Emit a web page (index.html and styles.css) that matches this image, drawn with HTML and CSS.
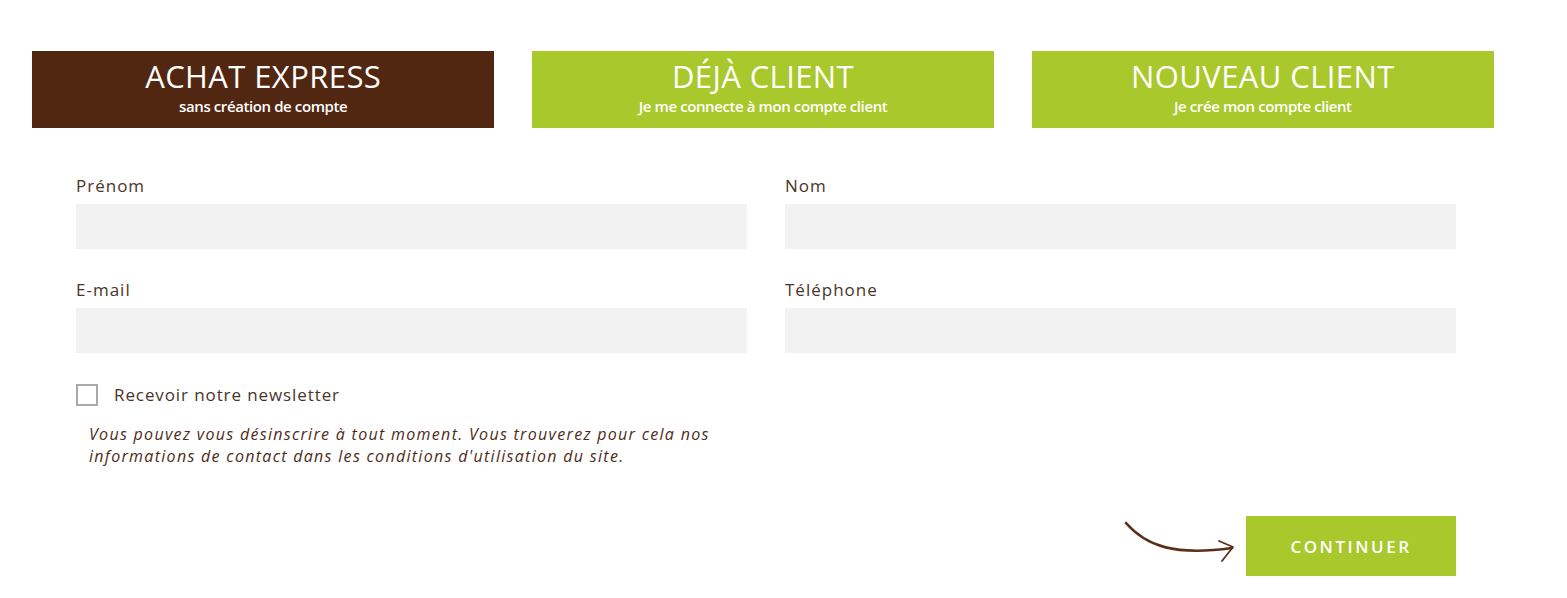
FILE: index.html
```html
<!DOCTYPE html>
<html lang="fr">
<head>
  <meta charset="UTF-8">
  <title>Commande</title>
  <link rel="stylesheet" href="styles.css">
</head>
<body>
<div class="checkout">
  <div class="tabs">
    <div class="tab tab_active">
      <div class="tab_title">Achat express</div>
      <div class="tab_sub">sans création de compte</div>
    </div>
    <div class="tab">
      <div class="tab_title">Déjà client</div>
      <div class="tab_sub">Je me connecte à mon compte client</div>
    </div>
    <div class="tab">
      <div class="tab_title">Nouveau client</div>
      <div class="tab_sub">Je crée mon compte client</div>
    </div>
  </div>

  <form class="form">
    <div class="grid">
      <div class="field">
        <label>Prénom</label>
        <input type="text">
      </div>
      <div class="field">
        <label>Nom</label>
        <input type="text">
      </div>
      <div class="field">
        <label>E-mail</label>
        <input type="text">
      </div>
      <div class="field">
        <label>Téléphone</label>
        <input type="text">
      </div>
    </div>

    <label class="check">
      <span class="box"></span>
      Recevoir notre newsletter
    </label>
    <p class="note">Vous pouvez vous désinscrire à tout moment. Vous trouverez pour cela nos<br>
      informations de contact dans les conditions d'utilisation du site.</p>

    <div class="actions">
      <svg class="arrow" width="113" height="48" viewBox="0 0 113 48">
        <path d="M2 7 C 22 30, 50 40, 108 32" fill="none" stroke="#5a2f18" stroke-width="2.6" stroke-linecap="round"/>
        <path d="M95 25 L109 31 L98 45" fill="none" stroke="#5a2f18" stroke-width="1.8" stroke-linecap="round" stroke-linejoin="round"/>
      </svg>
      <button type="button" class="btn">Continuer</button>
    </div>
  </form>
</div>
</body>
</html>
```

FILE: styles.css
```css
body {
  margin: 0;
  background: #ffffff;
  font-family: "Open Sans", "Liberation Sans", sans-serif;
  color: #4b3427;
}

.checkout {
  width: 1462px;
  padding: 51px 0 0 32px;
}

.tabs {
  display: flex;
  gap: 37.5px;
}

.tab {
  flex: 1;
  height: 77px;
  background: #a9c82c;
  color: #ffffff;
  text-align: center;
  box-sizing: border-box;
  padding-top: 6px;
}

.tab_active {
  background: #522712;
}

.tab_title {
  font-size: 31px;
  line-height: 38px;
  text-transform: uppercase;
  letter-spacing: 0.4px;
}

.tab_sub {
  margin-top: 1px;
  font-size: 15px;
  font-weight: 600;
  letter-spacing: -0.4px;
  line-height: 20px;
}

.form {
  padding: 47px 38px 0 44px;
}

.grid {
  display: grid;
  grid-template-columns: 1fr 1fr;
  column-gap: 38px;
  row-gap: 30px;
}

.field label {
  display: block;
  font-size: 17px;
  letter-spacing: 1px;
  line-height: 22px;
  margin-bottom: 7px;
}

.field input {
  display: block;
  width: 100%;
  height: 45px;
  box-sizing: border-box;
  border: none;
  background: #f2f2f2;
}

.check {
  display: flex;
  align-items: center;
  gap: 16px;
  margin-top: 31px;
  font-size: 17px;
  letter-spacing: 0.9px;
  line-height: 22px;
}

.box {
  width: 22px;
  height: 22px;
  box-sizing: border-box;
  border: 2px solid #a9a9a9;
}

.note {
  margin: 17px 0 0 13px;
  font-size: 16px;
  font-style: italic;
  letter-spacing: 1.3px;
  line-height: 22px;
  color: #4e2b18;
}

.actions {
  display: flex;
  justify-content: flex-end;
  align-items: flex-start;
  gap: 9px;
  margin-top: 49px;
}

.btn {
  width: 210px;
  height: 60px;
  border: none;
  background: #a9c82c;
  color: #ffffff;
  font-family: "Open Sans", "Liberation Sans", sans-serif;
  font-size: 17px;
  font-weight: 600;
  letter-spacing: 2.5px;
  text-transform: uppercase;
}
```
